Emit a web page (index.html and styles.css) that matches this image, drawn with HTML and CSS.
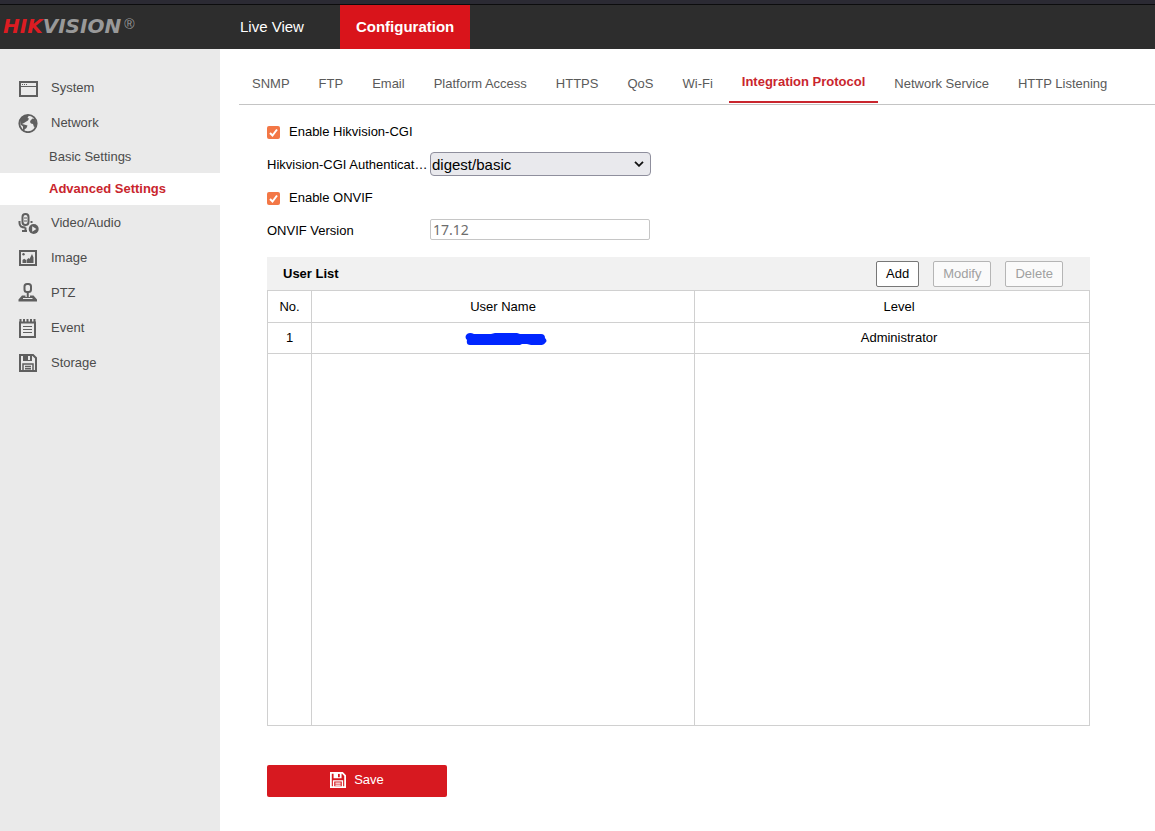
FILE: index.html
```html
<!DOCTYPE html>
<html lang="en">
<head>
<meta charset="utf-8">
<meta name="viewport" content="width=device-width, initial-scale=1">
<title>Configuration</title>
<link rel="stylesheet" href="styles.css">
</head>
<body>
<svg class="sprite" aria-hidden="true">
  <symbol id="disk" viewBox="0 0 18 18">
    <path fill="none" stroke="currentColor" stroke-width="2" d="M1 1h13l3 3v13H1z"/>
    <path fill="currentColor" fill-rule="evenodd" d="M4 1h9v6H4zM9 2v4h2V2z"/>
    <path fill="none" stroke="currentColor" stroke-width="1.500" d="M4 17v-7h10v7M6 12.500h6M6 14.800h6"/>
  </symbol>
</svg>
<header class="topbar">
  <div class="brand"><span class="brand-hik">HIK</span>VISION<span class="brand-mark">®</span></div>
  <nav class="topnav">
    <a class="topnav-link" href="#">Live View</a>
    <a class="topnav-link topnav-active" href="#">Configuration</a>
  </nav>
</header>
<div class="layout">
  <nav class="sidebar">
    <a class="side-item" href="#">
      <svg class="side-icon" viewBox="0 0 20 20"><path fill="currentColor" fill-rule="evenodd" d="M1 3h19v16H1zM3 5v3h15V5zM3 9v8h15V9z"/><path fill="currentColor" d="M4 6h1v1H4zM6 6h1v1H6zM8 6h1v1H8z"/></svg>
      System</a>
    <a class="side-item" href="#">
      <svg class="side-icon" viewBox="0 0 20 20"><circle cx="10" cy="10.500" r="8.700" fill="none" stroke="currentColor" stroke-width="1.800"/><path fill="currentColor" d="M2 7C4 3 7 1.500 11 2.300L9.500 5l1.500.5-1 2L7.500 9 6 10l-2 1 2 .5 3.500 1-1 2.500-2 1.500V18L5 17v-3.500l-2.500-2zM12.500 7.500l2-2L17 6l1.500 4-.5 3.500-2 .5-1-3-2-.5-1-1.500z"/></svg>
      Network</a>
    <div class="submenu">
      <a class="sub-item" href="#">Basic Settings</a>
      <a class="sub-item sub-active" href="#">Advanced Settings</a>
    </div>
    <a class="side-item" href="#">
      <svg class="side-icon side-icon-large" viewBox="0 0 22 22"><rect x="4.500" y="2" width="6" height="11" rx="3" fill="none" stroke="currentColor" stroke-width="2"/><path d="M6 6h3M6 9h3" stroke="currentColor"/><path d="M1.500 9v2c0 3 2 4.500 6 4.500M7.500 15.500V19M4 19h5" fill="none" stroke="currentColor" stroke-width="2"/><path fill="currentColor" d="M12.500 9h2v2h-2z"/><circle cx="15.700" cy="17" r="5" fill="currentColor"/><path fill="#eaeaea" d="M14.200 14.300l4.200 2.700-4.200 2.700z"/></svg>
      Video/Audio</a>
    <a class="side-item" href="#">
      <svg class="side-icon" viewBox="0 0 20 20"><rect x="2" y="3" width="16" height="14" fill="none" stroke="currentColor" stroke-width="2"/><circle cx="5.500" cy="6.300" r="1.200" fill="currentColor"/><path fill="currentColor" d="M4.500 15v-3l1.700-1.300L8 12v3zM8.500 15v-3l2-2 1 1L14 6l1.500 3.500V15z"/></svg>
      Image</a>
    <a class="side-item" href="#">
      <svg class="side-icon" viewBox="0 0 20 20"><rect x="6.500" y="1" width="6.500" height="8" rx="2.500" fill="none" stroke="currentColor" stroke-width="2"/><path d="M9.750 9v6" stroke="currentColor" stroke-width="2"/><path fill="currentColor" fill-rule="evenodd" d="M4 12.500h3.500v1.500h4.500v-1.500h3.500l3.500 4v2H.5v-2zM5 15v1h9.500v-1z"/></svg>
      PTZ</a>
    <a class="side-item" href="#">
      <svg class="side-icon" viewBox="0 0 20 20"><path fill="none" stroke="currentColor" stroke-width="2" d="M2 4.500h15V19H2z"/><path d="M2.500 1v3M6 1v3M9.500 1v3M13 1v3M16.500 1v3" stroke="currentColor" stroke-width="2"/><path d="M5 8.500h9M5 11.500h9M5 14.500h9" stroke="currentColor" stroke-width="1.200"/></svg>
      Event</a>
    <a class="side-item" href="#">
      <svg class="side-icon" viewBox="0 0 20 20"><use href="#disk" x="1" y="1" width="18" height="18"/></svg>
      Storage</a>
  </nav>
  <main class="main">
    <nav class="tabs">
      <a class="tab" href="#">SNMP</a>
      <a class="tab" href="#">FTP</a>
      <a class="tab" href="#">Email</a>
      <a class="tab" href="#">Platform Access</a>
      <a class="tab" href="#">HTTPS</a>
      <a class="tab" href="#">QoS</a>
      <a class="tab" href="#">Wi-Fi</a>
      <a class="tab tab-active" href="#">Integration Protocol</a>
      <a class="tab" href="#">Network Service</a>
      <a class="tab" href="#">HTTP Listening</a>
    </nav>
    <form class="content">
      <div class="field">
        <span class="check"><input class="check-input" type="checkbox" id="cgi" checked><svg class="check-tick" viewBox="0 0 13 13"><path d="M3 7l2.500 2.500L10 3.500" fill="none" stroke="#fff" stroke-width="2"/></svg></span>
        <label for="cgi">Enable Hikvision-CGI</label>
      </div>
      <div class="field">
        <label class="field-label" for="auth">Hikvision-CGI Authentication</label>
        <span class="picker"><select class="picker-select" id="auth"><option>digest/basic</option></select><svg class="picker-arrow" viewBox="0 0 10 6"><path d="M1 .8l4 4 4-4" fill="none" stroke="#111" stroke-width="1.800"/></svg></span>
      </div>
      <div class="field">
        <span class="check"><input class="check-input" type="checkbox" id="onvif" checked><svg class="check-tick" viewBox="0 0 13 13"><path d="M3 7l2.500 2.500L10 3.500" fill="none" stroke="#fff" stroke-width="2"/></svg></span>
        <label for="onvif">Enable ONVIF</label>
      </div>
      <div class="field">
        <label class="field-label" for="version">ONVIF Version</label>
        <input class="text-input" id="version" type="text" value="17.12" disabled>
      </div>
      <section class="users">
        <div class="users-bar">
          <h2 class="users-title">User List</h2>
          <button class="btn" type="button">Add</button>
          <button class="btn" type="button" disabled>Modify</button>
          <button class="btn" type="button" disabled>Delete</button>
        </div>
        <table class="grid">
          <thead>
            <tr><th class="col-no">No.</th><th class="col-name">User Name</th><th class="col-level">Level</th></tr>
          </thead>
          <tbody>
            <tr><td>1</td><td><svg class="redacted" viewBox="0 0 82 13"><path fill="#0026ff" d="M2 1Q5-1 9 1h17l4-1h22l3 1h21q4 0 4 4 3 3 0 5-1 2-5 2h-9l-4-1h-5l-2 1H5Q1 12 2 7-1 4 2 1z"/></svg></td><td class="col-level">Administrator</td></tr>
            <tr class="grid-rest"><td></td><td></td><td></td></tr>
          </tbody>
        </table>
      </section>
      <button class="save" type="button"><svg class="save-icon"><use href="#disk"/></svg>Save</button>
    </form>
  </main>
</div>
</body>
</html>
```
FILE: styles.css
```css
* { box-sizing: border-box; }
body {
  margin: 0;
  min-height: 100vh;
  display: flex;
  flex-direction: column;
  font: 13px/16px "Liberation Sans", Arial, sans-serif;
  color: #000;
  background: #fff;
}
a { color: inherit; text-decoration: none; }
.sprite { position: absolute; width: 0; height: 0; }

.topbar {
  display: flex;
  height: 49px;
  border-top: 4px solid #2b2a33;
  background: #2d2d2d;
  box-shadow: inset 0 1px #0c0c0d;
  padding-top: 1px;
}
.brand {
  display: flex;
  width: 220px;
  padding-left: 3px;
  font: italic bold 20px/43px "DejaVu Sans", sans-serif;
  color: #999;
}
.brand-hik { color: #dc1c22; }
.brand-mark {
  margin-left: 3px;
  font: 14px/38px "Liberation Sans", sans-serif;
}
.topnav { display: flex; gap: 20px; padding-left: 4px; }
.topnav-link {
  padding: 0 16px;
  font-size: 15px;
  line-height: 44px;
  color: #fff;
}
.topnav-active { background: #d9141b; font-weight: bold; }

.layout { display: flex; flex: 1; }
.sidebar {
  flex: 0 0 220px;
  padding-top: 21px;
  background: #eaeaea;
  color: #4c4c4c;
}
.side-item {
  display: flex;
  align-items: center;
  gap: 13px;
  height: 35px;
  padding-left: 18px;
}
.side-icon { width: 20px; height: 20px; margin-top: 1px; color: #5f5f5f; }
.side-icon-large { width: 22px; height: 22px; margin-right: -2px; }
.submenu { padding-top: 1px; }
.sub-item { display: block; padding: 8px 0 8px 49px; }
.sub-active { background: #fff; color: #c9252d; font-weight: bold; }

.main { flex: 1; min-width: 0; padding-left: 19px; }
.tabs {
  display: flex;
  align-items: flex-end;
  gap: 3px;
  height: 56px;
  padding-bottom: 1px;
  border-bottom: 1px solid #c4c4c4;
  color: #5a5a5a;
  white-space: nowrap;
}
.tab { padding: 0 13px 11px; }
.tab-active {
  border-bottom: 2px solid #c9252d;
  color: #c9252d;
  font-weight: bold;
}

.content { padding: 10px 65px 34px 28px; }
.field { display: flex; align-items: center; height: 33px; }
.field-label {
  width: 163px;
  overflow: hidden;
  text-overflow: ellipsis;
  white-space: nowrap;
}
.check { display: grid; margin: 2px 9px 0 0; }
.check-input {
  grid-area: 1 / 1;
  appearance: none;
  width: 13px;
  height: 13px;
  margin: 0;
  border-radius: 2px;
  background: #f37746;
}
.check-tick { grid-area: 1 / 1; width: 13px; height: 13px; pointer-events: none; }
.picker { display: grid; align-items: center; width: 221px; margin-bottom: 1px; }
.picker-select {
  grid-area: 1 / 1;
  appearance: none;
  height: 24px;
  padding: 0 2px 0 1px;
  border: 1px solid #8f8f9d;
  border-radius: 4px;
  background: #e9e9ed;
  color: #000;
  font: 15px "Liberation Sans", Arial, sans-serif;
}
.picker-arrow {
  grid-area: 1 / 1;
  justify-self: end;
  width: 10px;
  height: 6px;
  margin-right: 7px;
  pointer-events: none;
}
.text-input {
  width: 220px;
  height: 21px;
  margin-bottom: 2px;
  padding: 0 2px;
  border: 1px solid #c6c6c6;
  border-radius: 2px;
  background: #fff;
  color: #6d6d6d;
  font: 14px "Noto Sans", sans-serif;
}

.users { margin-top: 10px; }
.users-bar {
  display: flex;
  align-items: center;
  gap: 14px;
  height: 33px;
  padding: 0 27px 0 16px;
  background: #f1f1f1;
}
.users-title { margin: 0; margin-right: auto; font-size: 13px; }
.btn {
  height: 26px;
  padding: 0 9px;
  border: 1px solid #777;
  border-radius: 2px;
  background: #fff;
  color: #000;
  font: inherit;
}
.btn:disabled { border-color: #b5b5b5; background: #fafafa; color: #a0a0a0; }
.grid { width: 100%; border-collapse: collapse; table-layout: fixed; }
.grid th, .grid td {
  height: 31px;
  padding: 0;
  border: 1px solid #d0d0d0;
  font-weight: normal;
  text-align: center;
}
.grid th { height: 32px; }
.col-no { width: 44px; }
.col-name { width: 46.6%; }
.grid .col-level { padding-left: 14px; }
.grid .grid-rest td { height: 372px; }
.redacted { display: block; width: 88px; height: 13px; margin: 2px auto 0; padding-left: 6px; }
.save {
  display: flex;
  align-items: center;
  justify-content: center;
  gap: 8px;
  width: 180px;
  height: 32px;
  margin-top: 39px;
  padding: 0 0 2px;
  border: 0;
  border-radius: 2px;
  background: #d71920;
  color: #fff;
  font: inherit;
}
.save-icon { width: 16px; height: 16px; }
```
